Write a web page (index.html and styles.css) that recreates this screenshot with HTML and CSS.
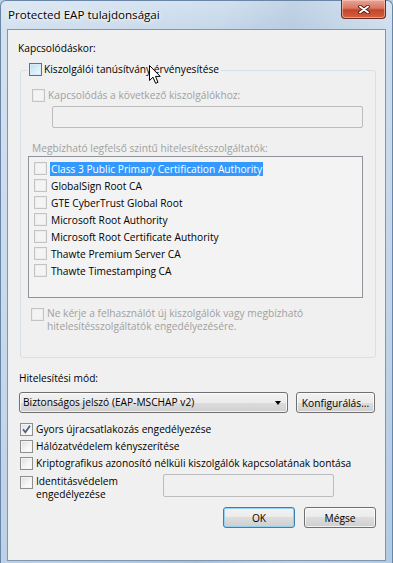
FILE: index.html
```html
<!DOCTYPE html>
<html lang="hu">
<head>
    <meta charset="UTF-8">
    <meta name="viewport" content="width=device-width, initial-scale=1.0">
    <title>Protected EAP tulajdonságai</title>
    <link rel="stylesheet" href="styles.css">
</head>
<body>
    <div class="window">
        <div class="titlebar">
            <span class="title">Protected EAP tulajdonságai</span>
            <button class="close" aria-label="Bezárás">
                <svg width="12" height="9" viewBox="0 0 12 9">
                    <path d="M2 1.5 L10 7.5 M10 1.5 L2 7.5" stroke="#4a140c" stroke-width="3.6" stroke-linecap="round"/>
                    <path d="M2 1.5 L10 7.5 M10 1.5 L2 7.5" stroke="#fff" stroke-width="2" stroke-linecap="round"/>
                </svg>
            </button>
        </div>

        <div class="client">
            <div class="label">Kapcsolódáskor:</div>

            <div class="group">
                <label class="legend"><span class="box hover"></span>Kiszolgálói tanúsítvány érvényesítése</label>

                <label class="check disabled servers"><span class="box"></span>Kapcsolódás a következő kiszolgálókhoz:</label>
                <div class="textbox servers-field"></div>

                <div class="label disabled ca-label">Megbízható legfelső szintű hitelesítésszolgáltatók:</div>
                <ul class="list">
                    <li><span class="box"></span><span class="name selected">Class 3 Public Primary Certification Authority</span></li>
                    <li><span class="box"></span><span class="name">GlobalSign Root CA</span></li>
                    <li><span class="box"></span><span class="name">GTE CyberTrust Global Root</span></li>
                    <li><span class="box"></span><span class="name">Microsoft Root Authority</span></li>
                    <li><span class="box"></span><span class="name">Microsoft Root Certificate Authority</span></li>
                    <li><span class="box"></span><span class="name">Thawte Premium Server CA</span></li>
                    <li><span class="box"></span><span class="name">Thawte Timestamping CA</span></li>
                </ul>

                <label class="check multi disabled prompt"><span class="box"></span><span>Ne kérje a felhasználót új kiszolgálók vagy megbízható<br>hitelesítésszolgáltatók engedélyezésére.</span></label>
            </div>

            <div class="label auth-label">Hitelesítési mód:</div>
            <div class="auth-row">
                <div class="combo">Biztonságos jelszó (EAP-MSCHAP v2)<span class="arrow"></span></div>
                <button class="btn config">Konfigurálás...</button>
            </div>

            <div class="options">
                <label class="check opt">
                    <span class="box">
                        <svg width="11" height="11" viewBox="0 0 11 11"><path d="M2 5.2 L4.4 8.2 L9 1.8" fill="none" stroke="#4a5f88" stroke-width="1.8"/></svg>
                    </span>Gyors újracsatlakozás engedélyezése
                </label>
                <label class="check opt"><span class="box"></span>Hálózatvédelem kényszerítése</label>
                <label class="check opt"><span class="box"></span>Kriptografikus azonosító nélküli kiszolgálók kapcsolatának bontása</label>
                <div class="identity-row">
                    <label class="check multi identity"><span class="box"></span><span>Identitásvédelem<br>engedélyezése</span></label>
                    <div class="textbox identity-field"></div>
                </div>
            </div>

            <div class="actions">
                <button class="btn default">OK</button>
                <button class="btn">Mégse</button>
            </div>
        </div>
    </div>

    <!-- mouse pointer left over the dialog -->
    <svg class="cursor" width="13" height="20" viewBox="0 0 13 20">
        <path d="M0.5 0.5 L0.5 15.5 L4 12.2 L6.6 18.3 L9 17.3 L6.5 11.4 L11.2 11.4 Z" fill="#fff" stroke="#000" stroke-width="1" stroke-linejoin="miter"/>
    </svg>
</body>
</html>
```

FILE: styles.css
```css
body {
    margin: 0;
    width: 393px;
    height: 563px;
    overflow: hidden;
    font-family: "Open Sans", "Noto Sans", sans-serif;
    font-size: 10.2px;
    line-height: 13px;
    color: #000;
    background: #b9cfe6;
}
.window {
    box-sizing: border-box;
    height: 563px;
    display: flex;
    flex-direction: column;
    border: 1px solid #6a86a6;
    border-bottom: none;
    border-radius: 6px 6px 0 0;
    background:
        linear-gradient(100deg, rgba(255, 255, 255, 0.25) 0, rgba(255, 255, 255, 0) 45%, rgba(120, 150, 185, 0.18) 60%, rgba(255, 255, 255, 0.15) 80%, rgba(255, 255, 255, 0) 100%),
        linear-gradient(to bottom, #d3e1ef 0, #c6d8ea 28px, #b2cae4 100%);
}
.titlebar {
    height: 28px;
    display: flex;
    justify-content: space-between;
    align-items: flex-start;
    padding-left: 7px;
}
.title {
    margin-top: 7px;
    font-size: 11.6px;
    line-height: 14px;
    text-shadow: 0 0 6px #fff, 0 0 3px #fff;
}
.close {
    width: 45px;
    height: 19px;
    margin: -1px 6px 0 0;
    padding: 0;
    border: 1px solid #6b2a20;
    border-top: none;
    border-radius: 0 0 4px 4px;
    background: linear-gradient(to bottom, #e8a493 0, #d77863 45%, #c2452b 55%, #d5603f 100%);
    box-shadow: inset 0 0 0 1px rgba(255, 210, 200, 0.55);
    display: flex;
    justify-content: center;
    align-items: center;
}
.client {
    flex: 1;
    margin: 0 6px 2px 6px;
    padding: 12px 0 0 10px;
    border: 1px solid #8196ad;
    background: #f0f0f0;
}
.label {
    height: 13px;
    white-space: nowrap;
}
.disabled {
    color: #a0a0a0;
}

/* checkboxes */
.check {
    display: flex;
    align-items: center;
    gap: 3px;
    height: 13px;
    white-space: nowrap;
}
.check.multi {
    align-items: flex-start;
    height: auto;
}
.check.multi .box {
    margin-top: 1px;
}
.box {
    box-sizing: border-box;
    flex: none;
    width: 13px;
    height: 13px;
    border: 1px solid #8e8f8f;
    background: linear-gradient(135deg, #dcdcdc 0, #f6f6f6 60%, #ffffff 100%);
    box-shadow: inset 0 0 0 1px #f4f4f4;
    display: flex;
    align-items: center;
    justify-content: center;
}
.disabled .box,
.list .box {
    border-color: #c4c4c4;
    background: #f4f4f4;
    box-shadow: inset 0 0 0 1px #ececec;
}
.box.hover {
    border-color: #3d7bad;
    background: linear-gradient(135deg, #b9ddf3 0, #dcf0fb 60%, #eef8fd 100%);
    box-shadow: inset 0 0 0 1px #d8ecf8;
}

/* group */
.group {
    box-sizing: border-box;
    width: 356px;
    margin: 15px 0 0 2px;
    padding: 0 0 24px 11px;
    border: 1px solid #d5dfe5;
    border-radius: 3px;
}
.legend {
    display: flex;
    align-items: center;
    gap: 2px;
    width: max-content;
    height: 13px;
    margin: -8px 0 0 -5px;
    padding: 0 2px;
    background: #f0f0f0;
}
.servers {
    margin-top: 13px;
}
.textbox {
    box-sizing: border-box;
    border: 1px solid #bcbcbc;
    border-radius: 2px;
    background: #f0f0f0;
}
.servers-field {
    width: 311px;
    height: 22px;
    margin: 4px 0 0 20px;
}
.ca-label {
    margin-top: 14px;
}
.list {
    box-sizing: border-box;
    width: 335px;
    height: 142px;
    margin: 1px 0 0 -4px;
    padding: 3px 0 0 5px;
    list-style: none;
    border: 1px solid #8f939a;
    background: #f3f3f3;
}
.list li {
    display: flex;
    align-items: center;
    gap: 3px;
    height: 17px;
    white-space: nowrap;
}
.name {
    padding: 0 1px;
    line-height: 14px;
}
.name.selected {
    background: #3399ff;
    color: #fff;
}
.prompt {
    margin: 9px 0 0 -1px;
}

/* authentication method */
.auth-label {
    margin: 14px 0 0 1px;
}
.auth-row {
    display: flex;
    align-items: flex-start;
    margin: 7px 0 0 1px;
}
.combo,
.btn {
    box-sizing: border-box;
    height: 21px;
    border: 1px solid #707070;
    border-radius: 3px;
    background: linear-gradient(to bottom, #f2f2f2 0, #ebebeb 50%, #dddddd 50%, #cfcfcf 100%);
    box-shadow: inset 0 0 0 1px rgba(255, 255, 255, 0.7);
    font-family: inherit;
    font-size: 10.2px;
    color: #000;
}
.combo {
    width: 269px;
    display: flex;
    align-items: center;
    justify-content: space-between;
    padding: 0 6px 0 3px;
    white-space: nowrap;
}
.arrow {
    width: 0;
    height: 0;
    border-left: 3.5px solid transparent;
    border-right: 3.5px solid transparent;
    border-top: 4px solid #000;
}
.btn {
    width: 72px;
    padding: 0;
}
.config {
    width: 79px;
    margin-left: 8px;
}
.btn.default {
    border-color: #3c7fb1;
    box-shadow: inset 0 0 0 1px #98d1ef;
}

/* options */
.options {
    margin: 8px 0 0 2px;
}
.opt {
    height: 17px;
}
.identity-row {
    display: flex;
    align-items: flex-start;
}
.identity {
    width: 143px;
    padding-top: 3px;
}
.identity-field {
    width: 171px;
    height: 23px;
    margin-top: 2px;
}
.actions {
    display: flex;
    justify-content: flex-end;
    gap: 9px;
    margin: 6px 9px 0 0;
}

.cursor {
    position: absolute;
    left: 149px;
    top: 65px;
}
```
